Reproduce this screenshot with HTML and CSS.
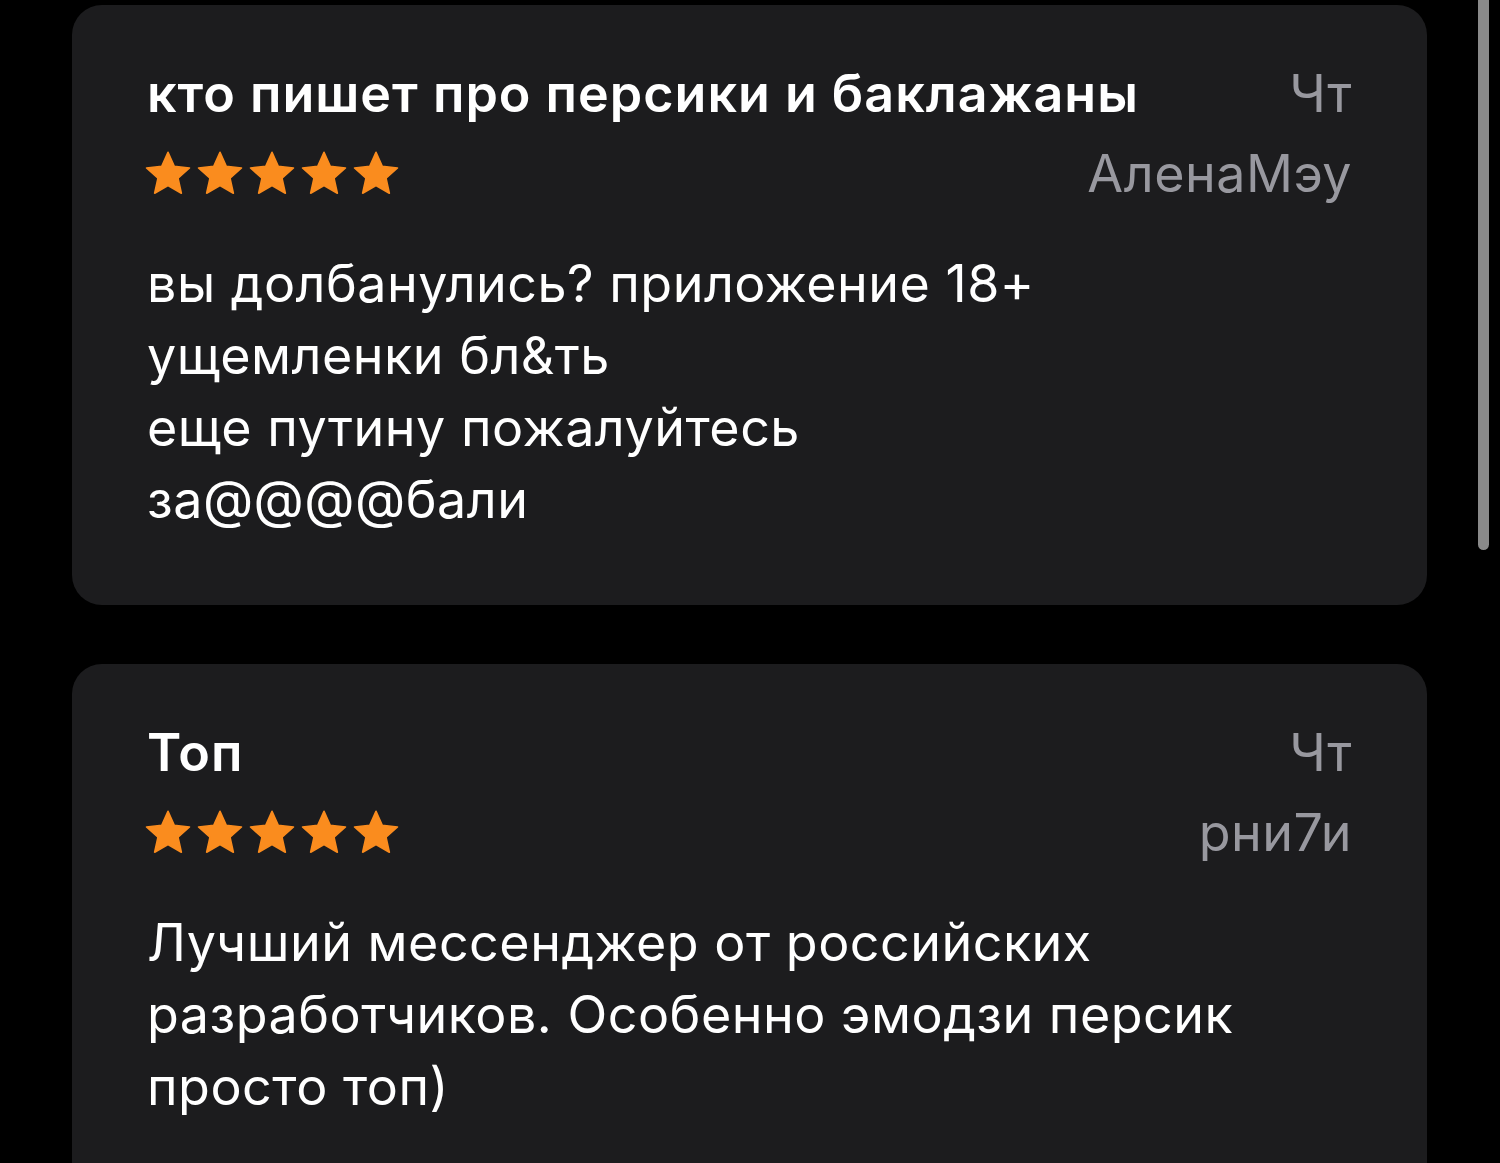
FILE: index.html
```html
<!DOCTYPE html>
<html lang="ru">
<head>
<meta charset="utf-8">
<title>Отзывы</title>
<link rel="stylesheet" href="styles.css">
</head>
<body>
<main class="feed">
  <article class="card">
    <header class="head">
      <div class="row">
        <h2 class="title">кто пишет про персики и баклажаны</h2>
        <span class="date">Чт</span>
      </div>
      <div class="row">
        <div class="stars" aria-label="5 звёзд">
          <svg viewBox="0 0 24 24"><path d="M12 1.6l3 6.7 7.3.8-5.5 4.9 1.6 7.2L12 17.5l-6.4 3.7 1.6-7.2-5.5-4.9 7.3-.8z"/></svg>
          <svg viewBox="0 0 24 24"><path d="M12 1.6l3 6.7 7.3.8-5.5 4.9 1.6 7.2L12 17.5l-6.4 3.7 1.6-7.2-5.5-4.9 7.3-.8z"/></svg>
          <svg viewBox="0 0 24 24"><path d="M12 1.6l3 6.7 7.3.8-5.5 4.9 1.6 7.2L12 17.5l-6.4 3.7 1.6-7.2-5.5-4.9 7.3-.8z"/></svg>
          <svg viewBox="0 0 24 24"><path d="M12 1.6l3 6.7 7.3.8-5.5 4.9 1.6 7.2L12 17.5l-6.4 3.7 1.6-7.2-5.5-4.9 7.3-.8z"/></svg>
          <svg viewBox="0 0 24 24"><path d="M12 1.6l3 6.7 7.3.8-5.5 4.9 1.6 7.2L12 17.5l-6.4 3.7 1.6-7.2-5.5-4.9 7.3-.8z"/></svg>
        </div>
        <span class="author">АленаМэу</span>
      </div>
    </header>
    <p class="text">вы долбанулись? приложение 18+<br>ущемленки бл&amp;ть<br>еще путину пожалуйтесь<br>за@@@@бали</p>
  </article>

  <article class="card">
    <header class="head">
      <div class="row">
        <h2 class="title">Топ</h2>
        <span class="date">Чт</span>
      </div>
      <div class="row">
        <div class="stars" aria-label="5 звёзд">
          <svg viewBox="0 0 24 24"><path d="M12 1.6l3 6.7 7.3.8-5.5 4.9 1.6 7.2L12 17.5l-6.4 3.7 1.6-7.2-5.5-4.9 7.3-.8z"/></svg>
          <svg viewBox="0 0 24 24"><path d="M12 1.6l3 6.7 7.3.8-5.5 4.9 1.6 7.2L12 17.5l-6.4 3.7 1.6-7.2-5.5-4.9 7.3-.8z"/></svg>
          <svg viewBox="0 0 24 24"><path d="M12 1.6l3 6.7 7.3.8-5.5 4.9 1.6 7.2L12 17.5l-6.4 3.7 1.6-7.2-5.5-4.9 7.3-.8z"/></svg>
          <svg viewBox="0 0 24 24"><path d="M12 1.6l3 6.7 7.3.8-5.5 4.9 1.6 7.2L12 17.5l-6.4 3.7 1.6-7.2-5.5-4.9 7.3-.8z"/></svg>
          <svg viewBox="0 0 24 24"><path d="M12 1.6l3 6.7 7.3.8-5.5 4.9 1.6 7.2L12 17.5l-6.4 3.7 1.6-7.2-5.5-4.9 7.3-.8z"/></svg>
        </div>
        <span class="author">рни7и</span>
      </div>
    </header>
    <p class="text">Лучший мессенджер от российских<br>разработчиков. Особенно эмодзи персик<br>просто топ)</p>
  </article>
</main>
<div class="scrollbar"></div>
</body>
</html>
```

FILE: styles.css
```css
html, body {
  margin: 0;
  padding: 0;
  height: 100%;
  overflow: hidden;
  background: #000;
}

body {
  position: relative;
  font-family: Inter, "Noto Sans", "Liberation Sans", sans-serif;
  color: #fff;
}

.feed {
  display: flex;
  flex-direction: column;
  gap: 59px;
  padding: 5px 73px 0 72px;
}

.card {
  background: #1c1c1e;
  border-radius: 30px;
  padding: 49px 75px 69px;
}

.row {
  display: flex;
  justify-content: space-between;
  align-items: center;
  height: 80px;
}

.title {
  margin: 0;
  font-size: 52px;
  font-weight: 600;
  line-height: 80px;
  letter-spacing: 1px;
  white-space: nowrap;
}

.date,
.author {
  font-size: 52px;
  line-height: 80px;
  letter-spacing: 0.5px;
  color: #98989f;
  white-space: nowrap;
}

.stars {
  display: flex;
  gap: 2px;
  align-items: center;
  margin-left: -4px;
}

.stars svg {
  width: 50px;
  height: 50px;
  fill: #fa8c1e;
  stroke: #fa8c1e;
  stroke-width: 0.8;
  stroke-linejoin: round;
}

.text {
  margin: 34px 0 0;
  font-size: 52px;
  line-height: 72px;
  letter-spacing: 0.5px;
}

.scrollbar {
  position: absolute;
  top: -6px;
  right: 11px;
  width: 11px;
  height: 556px;
  border-radius: 6px;
  background: #8a8a8a;
}
```
